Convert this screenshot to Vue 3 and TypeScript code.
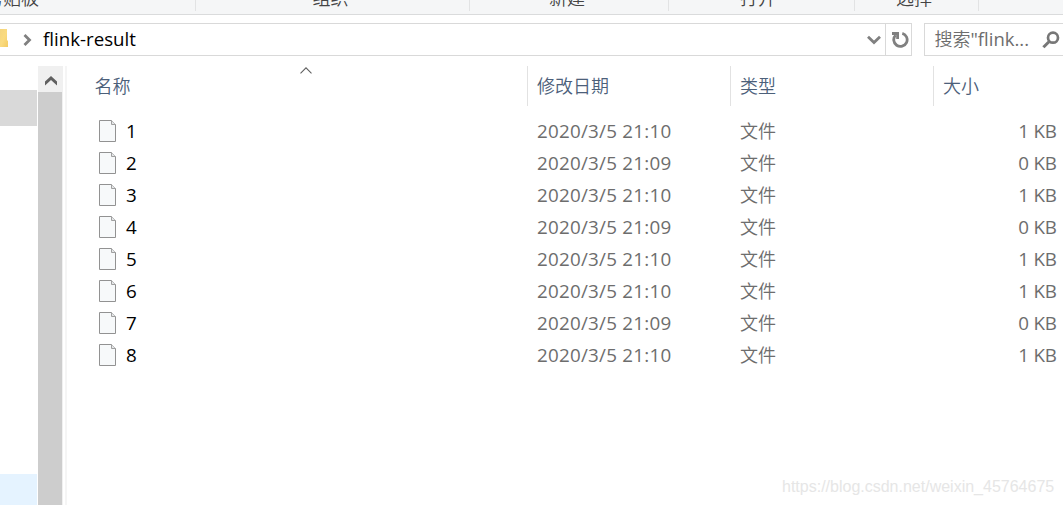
<script setup lang="ts">
interface FileRow {
  name: string
  date: string
  type: string
  size: string
}

const groups: { label: string; key: string }[] = [
  { label: '剪贴板', key: 'clipboard' },
  { label: '组织', key: 'organize' },
  { label: '新建', key: 'create' },
  { label: '打开', key: 'open' },
  { label: '选择', key: 'select' },
]

const sizes = [1, 0, 1, 0, 1, 1, 0, 1]
const files: FileRow[] = sizes.map((kb, i) => ({
  name: String(i + 1),
  date: kb ? '2020/3/5 21:10' : '2020/3/5 21:09',
  type: '文件',
  size: `${kb} KB`,
}))
</script>

<template>
  <div class="explorer">
    <div class="ribbon">
      <div v-for="g in groups" :key="g.key" class="group" :class="g.key"><span>{{ g.label }}</span></div>
    </div>
    <div class="bar">
      <div class="address">
        <svg class="folder" width="8" height="18" viewBox="0 0 8 18">
          <defs>
            <linearGradient id="fold" x1="0" y1="0" x2="1" y2="1">
              <stop offset="0" stop-color="#f4d57e" /><stop offset="0.5" stop-color="#fadb80" /><stop offset="1" stop-color="#f3cb62" />
            </linearGradient>
          </defs>
          <path d="M0 0H7V11L8 12V18H0Z" fill="url(#fold)" />
        </svg>
        <svg class="crumb" width="9" height="12" viewBox="0 0 9 12"><path d="M1.5 1L6.5 6L1.5 11" fill="none" stroke="#808080" stroke-width="2.8" /></svg>
        <span class="path">flink-result</span>
        <svg class="drop" width="14" height="10" viewBox="0 0 14 10"><path d="M1 1.8L7 7.6L13 1.8" fill="none" stroke="#808080" stroke-width="2.8" /></svg>
        <div class="refresh">
          <svg width="18" height="18" viewBox="0 0 18 18">
            <path d="M11.3 2.3A6.7 6.7 0 1 1 4.6 4.1" fill="none" stroke="#808080" stroke-width="2.8" />
            <path d="M1 1H8V8H5.2V4H1Z" fill="#808080" />
          </svg>
        </div>
      </div>
      <div class="search">
        <span class="hint">搜索<i>"flink...</i></span>
        <svg width="18" height="18" viewBox="0 0 18 18">
          <circle cx="11" cy="6.7" r="5" fill="none" stroke="#777" stroke-width="2.7" />
          <path d="M7.5 10.2L1.4 16.3" stroke="#777" stroke-width="3" />
        </svg>
      </div>
    </div>
    <div class="body">
      <div class="tree"><div class="selected"></div><div class="hover"></div></div>
      <div class="scroll">
        <div class="up"><svg width="12" height="10" viewBox="0 0 12 10"><path d="M0 5.5L6 0L12 5.5V9.5L6 4L0 9.5Z" fill="#606060" /></svg></div>
        <div class="thumb"></div>
      </div>
      <div class="split"></div>
      <div class="list">
        <div class="head">
          <div class="cell name"><span>名称</span>
            <svg class="sort" width="12" height="7" viewBox="0 0 12 7"><path d="M.5 6.3L6 .8L11.5 6.3" fill="none" stroke="#606060" stroke-width="1.1" /></svg>
          </div>
          <div class="cell date">修改日期</div>
          <div class="cell type">类型</div>
          <div class="cell size">大小</div>
        </div>
        <div class="rows">
          <div v-for="f in files" :key="f.name" class="row">
            <div class="cell name">
              <svg class="page" width="17" height="22" viewBox="0 0 17 22">
                <path d="M.5.5H12.5L16.5 4.5V21.5H.5Z" fill="#f7f9fa" stroke="#929292" />
                <path d="M12.5.5V4.5H16.5" fill="#e4e6e7" stroke="#a0a0a0" />
              </svg>
              <span>{{ f.name }}</span>
            </div>
            <div class="cell date">{{ f.date }}</div>
            <div class="cell type">{{ f.type }}</div>
            <div class="cell size">{{ f.size }}</div>
          </div>
        </div>
      </div>
    </div>
    <div class="watermark">https://blog.csdn.net/weixin_45764675</div>
  </div>
</template>

<style>
body { margin: 0; overflow: hidden; background: #fff; }
</style>

<style scoped>
* { box-sizing: border-box; }
svg { display: block; flex: none; }
.explorer {
  position: relative;
  width: 1063px;
  height: 505px;
  overflow: hidden;
  display: flex;
  flex-direction: column;
  background: #fff;
  font: 350 18px/24px "Noto Sans CJK SC", sans-serif;
  white-space: nowrap;
}
.ribbon {
  display: flex;
  height: 15px;
  flex: none;
  overflow: hidden;
  background: #f5f6f7;
  border-bottom: 1px solid #dadbdc;
  color: #444;
}
.group { height: 11px; border-right: 1px solid #e2e3e4; flex: none; }
.group span { display: block; margin-top: -15px; }
.clipboard { width: 196px; }
.clipboard span { margin-left: -15px; }
.organize { width: 274px; padding-left: 116.5px; }
.create { width: 199px; padding-left: 79px; }
.open { width: 186px; padding-left: 71px; }
.select { width: 124px; padding-left: 41px; }
.bar { display: flex; margin-top: 8px; height: 33px; flex: none; }
.address {
  display: flex;
  align-items: center;
  width: 912px;
  border: 1px solid #d9d9d9;
  border-left: 0;
}
.folder { margin-top: -3px; }
.crumb { margin: 1px 0 0 15px; }
.path { margin: -2px 0 0 11px; font: 18.7px/24px "Open Sans", sans-serif; color: #000; }
.drop { margin-left: auto; margin-right: 4px; margin-top: 1px; }
.refresh {
  width: 26px;
  height: 31px;
  border-left: 1px solid #d9d9d9;
  display: flex;
  align-items: center;
  padding: 0 0 0 5px;
}
.search {
  display: flex;
  align-items: center;
  width: 139px;
  margin-left: 12px;
  padding-left: 9.5px;
  border: 1px solid #d9d9d9;
  border-right: 0;
  color: #6d6d6d;
}
.hint { width: 107.5px; margin-top: -2px; }
.hint i { font: 18.5px/24px "Open Sans", sans-serif; }
.body { display: flex; flex: 1; margin-top: 10px; min-height: 0; }
.tree { width: 38px; padding-top: 24px; display: flex; flex-direction: column; }
.selected { width: 37px; height: 36px; background: #d9d9d9; }
.hover { width: 37px; height: 31px; margin-top: auto; background: #e5f3ff; }
.scroll { width: 25px; display: flex; flex-direction: column; background: #f0f0f0; }
.up { height: 26px; padding: 10px 0 0 7px; }
.thumb { flex: 1; width: 24px; background: #cdcdcd; }
.split { width: 2px; margin-left: 2px; background: #f5f5f5; }
.list { flex: 1; }
.head, .row { display: grid; grid-template-columns: 461px 203px 203px 129px; }
.head { height: 40px; line-height: 39px; color: #4c607a; }
.head .cell { height: 40px; border-right: 1px solid #e2e2e2; }
.head .name { position: relative; padding-left: 27.6px; }
.head .size { border: 0; }
.sort { position: absolute; left: 233px; top: 1px; }
.cell.date, .cell.type, .head .size { padding-left: 9px; }
.rows { padding-top: 9px; }
.row { height: 32px; line-height: 30px; color: #6d6d6d; }
.row .name {
  display: flex;
  align-items: center;
  padding-left: 32px;
  gap: 10px;
  color: #000;
  font: 18.8px/32px "Open Sans", sans-serif;
}
.row .date { font: 18.8px/32px "Open Sans", sans-serif; letter-spacing: 0.25px; }
.row .size { font: 18.8px/32px "Open Sans", sans-serif; letter-spacing: -0.2px; text-align: right; padding-right: 6.3px; }
.watermark {
  position: absolute;
  left: 782px;
  top: 477px;
  font: 16px/20px "Liberation Sans", sans-serif;
  color: #e6e6e6;
}
</style>
